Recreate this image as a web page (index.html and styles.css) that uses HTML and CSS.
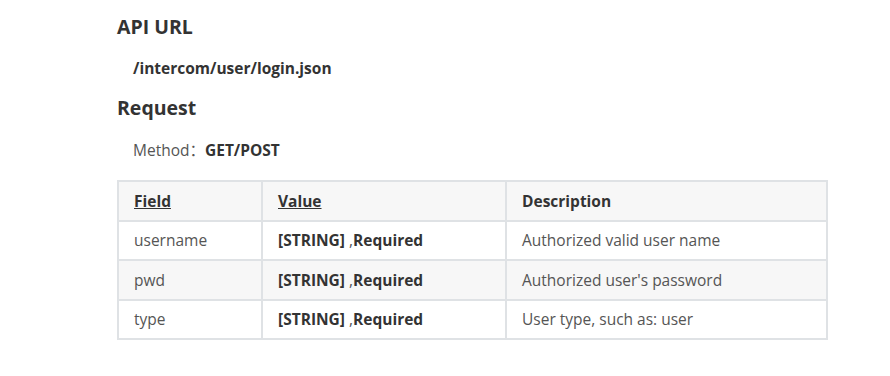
FILE: index.html
```html
<!DOCTYPE html>
<html>
<head>
<meta charset="utf-8">
<link rel="stylesheet" href="styles.css">
</head>
<body>
<div class="doc">
  <h3 class="h">API URL</h3>
  <p class="url">/intercom/user/login.json</p>
  <h3 class="h">Request</h3>
  <p class="method">Method：<b>GET/POST</b></p>
  <table class="tbl">
    <colgroup><col class="c1"><col class="c2"><col class="c3"></colgroup>
    <thead>
      <tr><th><u>Field</u></th><th><u>Value</u></th><th>Description</th></tr>
    </thead>
    <tbody>
      <tr><td>username</td><td><b>[STRING]</b> ,<b>Required</b></td><td>Authorized valid user name</td></tr>
      <tr class="alt"><td>pwd</td><td><b>[STRING]</b> ,<b>Required</b></td><td>Authorized user's password</td></tr>
      <tr><td>type</td><td><b>[STRING]</b> ,<b>Required</b></td><td>User type, such as: user</td></tr>
    </tbody>
  </table>
</div>
</body>
</html>
```
FILE: styles.css
```css
html, body { margin: 0; padding: 0; background: #fff; }
body { font-family: "Open Sans", "Noto Sans CJK SC", "Liberation Sans", sans-serif; color: #333; }
.doc { padding: 13px 0 0 117px; width: 711px; }
.h { font-size: 19.5px; font-weight: 700; margin: 0; line-height: 28px; color: #333; }
.url { font-size: 15.5px; font-weight: 700; margin: 16px 0 15px 16px; line-height: 22px; color: #333; }
.method { font-size: 15.5px; margin: 17px 0 19px 16px; line-height: 22px; color: #555; }
.method b { color: #333; }
.tbl { border-collapse: collapse; width: 711px; font-size: 15.5px; color: #555; }
.tbl th, .tbl td { border: 2px solid #dfe2e5; height: 37.5px; padding: 0 15px; text-align: left; }
.tbl th { font-weight: 700; color: #333; background: #f7f7f7; }
.tbl td b { color: #333; }
.tbl tr.alt td { background: #f7f7f7; }
.c1 { width: 144px; }
.c2 { width: 244px; }
```
